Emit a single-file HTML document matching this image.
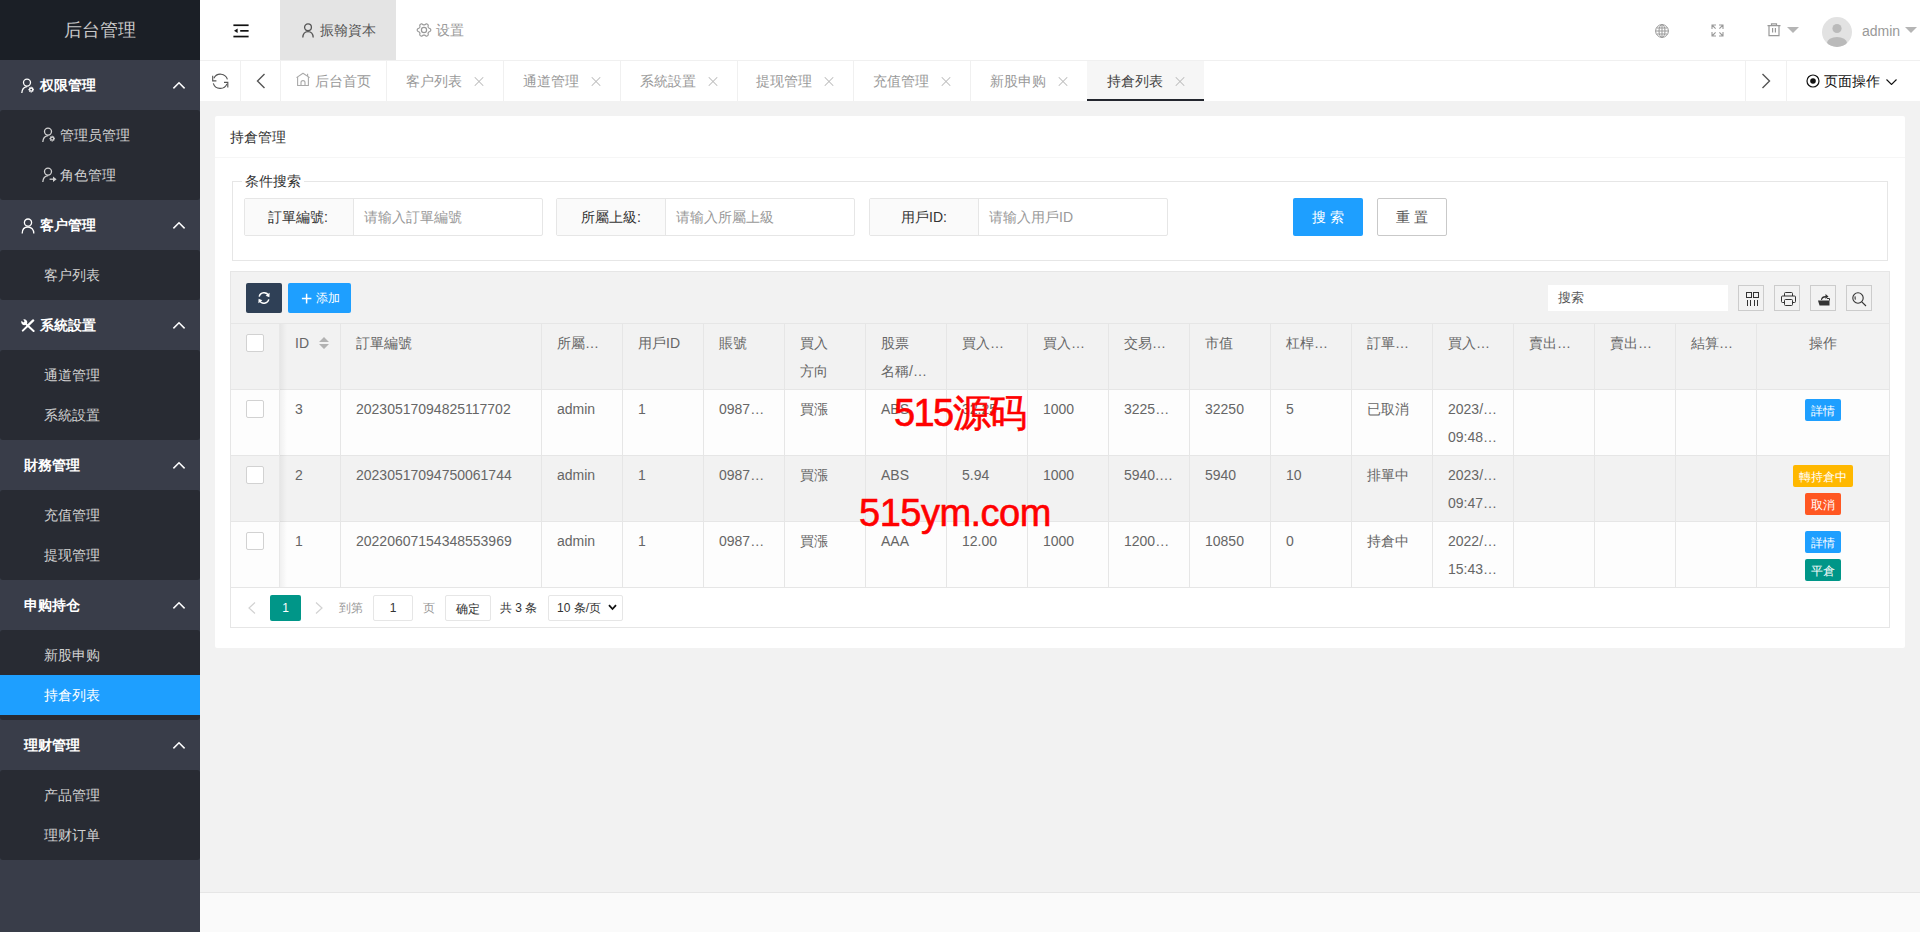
<!DOCTYPE html>
<html><head><meta charset="utf-8">
<style>
*{margin:0;padding:0;box-sizing:border-box}
html,body{width:1920px;height:932px;overflow:hidden;background:#f2f2f2;font-family:"Liberation Sans",sans-serif;font-size:14px;color:#333}
.abs{position:absolute}
#side{position:absolute;left:0;top:0;width:200px;height:932px;background:#393d49}
#logo{position:absolute;left:0;top:0;width:200px;height:60px;background:#1b1f26;color:#c8c8c8;font-size:18px;line-height:60px;text-align:center}
.pm{position:absolute;left:0;width:200px;height:50px;line-height:50px;color:#fff;font-weight:bold;font-size:14px;padding-left:24px}

.cb{position:absolute;left:0;width:200px;background:#282b33;border-radius:3px}
.ci{position:absolute;left:0;width:200px;height:40px;line-height:40px;color:#d2d2d2;padding-left:44px}
.ci.on{background:#1e9fff;color:#fff}
#head{position:absolute;left:200px;top:0;width:1720px;height:60px;background:#fff}
#tabs{position:absolute;left:200px;top:60px;width:1720px;height:41px;background:#fff;border-top:1px solid #f0f0f0}
#foot{position:absolute;left:200px;top:892px;width:1720px;height:40px;background:#fafafa;border-top:1px solid #e6e6e6}
#card{position:absolute;left:215px;top:116px;width:1690px;height:532px;background:#fff;border-radius:2px}
.tt{top:0;line-height:41px;color:#999}
.sep{position:absolute;top:0;width:1px;height:40px;background:#f0f0f0}
.cx{position:absolute;top:15px;width:10px;height:10px}
.cx:before,.cx:after{content:"";position:absolute;left:-1px;top:4.5px;width:12px;height:1px;background:#bbb;transform:rotate(45deg)}
.cx:after{transform:rotate(-45deg)}
</style><style>
#card{position:absolute;left:215px;top:116px;width:1690px;height:532px;background:#fff;border-radius:2px}
.ch{position:absolute;left:0;top:0;width:1690px;height:42px;border-bottom:1px solid #f6f6f6;line-height:42px;padding-left:15px;color:#333}
.fs{position:absolute;border:1px solid #e6e6e6}
.lg{position:absolute;background:#fff;padding:0 3px;line-height:20px;color:#333}
.ib{position:absolute;height:38px;border:1px solid #e6e6e6;border-radius:2px;background:#fff}
.ib .lb{position:absolute;left:0;top:0;width:109px;height:36px;background:#fafafa;border-right:1px solid #e6e6e6;line-height:36px;color:#333}
.ib .ph{position:absolute;left:119px;top:0;line-height:36px;color:#999}
.btn{position:absolute;height:38px;line-height:38px;text-align:center;border-radius:2px}
.tb{position:absolute;left:230px;top:271px;width:1660px;height:357px;border:1px solid #e6e6e6;background:#fff}
.cell{position:absolute;line-height:28px;color:#666;white-space:nowrap}
.vl{position:absolute;width:1px;background:#e6e6e6}
.hl{position:absolute;height:1px;background:#e6e6e6}
.chk{position:absolute;width:18px;height:18px;border:1px solid #d2d2d2;border-radius:2px;background:#fff}
.xs{position:absolute;height:22px;line-height:24px;font-size:12px;color:#fff;border-radius:2px;text-align:center;padding:0 5px}
.ibtn{position:absolute;top:14px;width:26px;height:26px;border:1px solid #ccc;background:#f2f2f2}
.wm{position:absolute;color:#f00;font-size:38px;white-space:nowrap;font-family:"Liberation Sans",sans-serif;-webkit-text-stroke:0.6px #f00;letter-spacing:-1px}
</style></head><body>
<div id="side">
  <div id="logo">后台管理</div>
  <div class="pm" style="top:60px;padding-left:40px"><svg class="abs" style="left:21px;top:18px" width="16" height="16" viewBox="0 0 16 16"><g fill="none" stroke="#fff" stroke-width="1.3"><circle cx="6" cy="4.6" r="3.5"/><path d="M0.8 15 C1 11 3 9 6.2 8.6"/><circle cx="10.2" cy="11.6" r="1.6"/><path d="M10.2 8.8 V9.6 M10.2 13.6 V14.4 M7.4 11.6 H8.2 M12.2 11.6 H13 M8.3 9.7 L8.8 10.2 M11.6 13 L12.1 13.5 M8.3 13.5 L8.8 13 M11.6 10.2 L12.1 9.7"/></g></svg>权限管理<svg class="abs" style="left:172px;top:21px" width="14" height="9" viewBox="0 0 14 9"><path d="M1.4 7.4 L7 1.8 L12.6 7.4" fill="none" stroke="#fff" stroke-width="1.5"/></svg></div>
  <div class="cb" style="top:110px;height:90px">
    <div class="ci" style="top:5px;padding-left:60px"><svg class="abs" style="left:42px;top:12px" width="16" height="16" viewBox="0 0 16 16"><g fill="none" stroke="#d2d2d2" stroke-width="1.3"><circle cx="6" cy="4.6" r="3.5"/><path d="M0.8 15 C1 11 3 9 6.2 8.6"/><circle cx="10.2" cy="11.6" r="1.6"/><path d="M10.2 8.8 V9.6 M10.2 13.6 V14.4 M7.4 11.6 H8.2 M12.2 11.6 H13 M8.3 9.7 L8.8 10.2 M11.6 13 L12.1 13.5 M8.3 13.5 L8.8 13 M11.6 10.2 L12.1 9.7"/></g></svg>管理员管理</div>
    <div class="ci" style="top:45px;padding-left:60px"><svg class="abs" style="left:42px;top:12px" width="16" height="16" viewBox="0 0 16 16"><g fill="none" stroke="#d2d2d2" stroke-width="1.3"><circle cx="6" cy="4.6" r="3.5"/><path d="M0.8 15 C1 11 3 9 6.2 8.6"/><path d="M7.6 12.2 H12.6"/></g><path d="M11 9.4 L14.6 12.2 L11 15 Z" fill="#d2d2d2"/></svg>角色管理</div>
  </div>
  <div class="pm" style="top:200px;padding-left:40px"><svg class="abs" style="left:21px;top:18px" width="14" height="16" viewBox="0 0 14 16"><g fill="none" stroke="#fff" stroke-width="1.3"><circle cx="7" cy="4.6" r="3.6"/><path d="M1.2 15.5 C1.2 11.4 3.6 9 7 9 C10.4 9 12.8 11.4 12.8 15.5"/></g></svg>客户管理<svg class="abs" style="left:172px;top:21px" width="14" height="9" viewBox="0 0 14 9"><path d="M1.4 7.4 L7 1.8 L12.6 7.4" fill="none" stroke="#fff" stroke-width="1.5"/></svg></div>
  <div class="cb" style="top:250px;height:50px">
    <div class="ci" style="top:5px">客户列表</div>
  </div>
  <div class="pm" style="top:300px;padding-left:40px"><svg class="abs" style="left:21px;top:19px" width="14" height="13" viewBox="0 0 14 13"><g fill="none" stroke="#fff" stroke-linecap="round"><path d="M5 5 L12.6 12" stroke-width="2"/><path d="M7.8 5.6 L12.2 1.4" stroke-width="2.2"/><path d="M6.6 7 L1.8 11.6" stroke-width="2"/></g><path d="M0.6 1.8 A3 3 0 0 0 4.6 5.8 L6 4.4 A3 3 0 0 0 2.2 0.4 L3.6 2.2 L2.4 3.4 Z" fill="#fff"/></svg>系統設置<svg class="abs" style="left:172px;top:21px" width="14" height="9" viewBox="0 0 14 9"><path d="M1.4 7.4 L7 1.8 L12.6 7.4" fill="none" stroke="#fff" stroke-width="1.5"/></svg></div>
  <div class="cb" style="top:350px;height:90px">
    <div class="ci" style="top:5px">通道管理</div>
    <div class="ci" style="top:45px">系統設置</div>
  </div>
  <div class="pm" style="top:440px">財務管理<svg class="abs" style="left:172px;top:21px" width="14" height="9" viewBox="0 0 14 9"><path d="M1.4 7.4 L7 1.8 L12.6 7.4" fill="none" stroke="#fff" stroke-width="1.5"/></svg></div>
  <div class="cb" style="top:490px;height:90px">
    <div class="ci" style="top:5px">充值管理</div>
    <div class="ci" style="top:45px">提现管理</div>
  </div>
  <div class="pm" style="top:580px">申购持仓<svg class="abs" style="left:172px;top:21px" width="14" height="9" viewBox="0 0 14 9"><path d="M1.4 7.4 L7 1.8 L12.6 7.4" fill="none" stroke="#fff" stroke-width="1.5"/></svg></div>
  <div class="cb" style="top:630px;height:90px">
    <div class="ci" style="top:5px">新股申购</div>
    <div class="ci on" style="top:45px">持倉列表</div>
  </div>
  <div class="pm" style="top:720px">理财管理<svg class="abs" style="left:172px;top:21px" width="14" height="9" viewBox="0 0 14 9"><path d="M1.4 7.4 L7 1.8 L12.6 7.4" fill="none" stroke="#fff" stroke-width="1.5"/></svg></div>
  <div class="cb" style="top:770px;height:90px">
    <div class="ci" style="top:5px">产品管理</div>
    <div class="ci" style="top:45px">理财订单</div>
  </div>
</div>
<div id="head">
  <svg class="abs" style="left:33px;top:24px" width="16" height="14" viewBox="0 0 16 14"><rect x="0.4" y="0.4" width="15.2" height="1.7" fill="#111"/><rect x="7.2" y="6.0" width="8.4" height="1.7" fill="#111"/><rect x="0.4" y="11.7" width="15.2" height="1.7" fill="#111"/><path d="M1 6.85 L4.6 4.6 L4.6 9.1 Z" fill="#111"/></svg>
  <div class="abs" style="left:80px;top:0;width:116px;height:60px;background:#e4e4e4"></div>
  <svg class="abs" style="left:102px;top:23px" width="12" height="15" viewBox="0 0 12 15"><circle cx="6" cy="4.3" r="3.4" fill="none" stroke="#555" stroke-width="1.3"/><path d="M0.8 14.5 C1 10.2 3.2 8.6 6 8.6 C8.8 8.6 11 10.2 11.2 14.5" fill="none" stroke="#555" stroke-width="1.3"/></svg>
  <div class="abs" style="left:120px;top:0;line-height:60px;color:#555">振翰資本</div>
  <svg class="abs" style="left:216px;top:22px" width="16" height="16" viewBox="0 0 16 16"><path d="M14.75 8.00 L14.72 8.35 L14.61 8.69 L14.44 9.02 L14.18 9.31 L13.70 9.53 L13.21 9.69 L12.93 9.89 L12.71 10.10 L12.52 10.30 L12.37 10.53 L12.26 10.76 L12.17 11.03 L12.10 11.32 L12.07 11.67 L12.17 12.17 L12.23 12.70 L12.10 13.07 L11.91 13.38 L11.66 13.64 L11.38 13.85 L11.05 13.99 L10.70 14.07 L10.34 14.09 L9.95 14.01 L9.53 13.70 L9.14 13.36 L8.83 13.22 L8.54 13.12 L8.27 13.07 L8.00 13.05 L7.73 13.07 L7.46 13.12 L7.17 13.22 L6.86 13.36 L6.47 13.70 L6.05 14.01 L5.66 14.09 L5.30 14.07 L4.95 13.99 L4.63 13.85 L4.34 13.64 L4.09 13.38 L3.90 13.07 L3.77 12.70 L3.83 12.17 L3.93 11.67 L3.90 11.32 L3.83 11.03 L3.74 10.76 L3.63 10.53 L3.48 10.30 L3.29 10.10 L3.07 9.89 L2.79 9.69 L2.30 9.53 L1.82 9.31 L1.56 9.02 L1.39 8.69 L1.28 8.35 L1.25 8.00 L1.28 7.65 L1.39 7.31 L1.56 6.98 L1.82 6.69 L2.30 6.47 L2.79 6.31 L3.07 6.11 L3.29 5.90 L3.48 5.70 L3.63 5.48 L3.74 5.24 L3.83 4.97 L3.90 4.68 L3.93 4.33 L3.83 3.83 L3.77 3.30 L3.90 2.93 L4.09 2.62 L4.34 2.36 L4.62 2.15 L4.95 2.01 L5.30 1.93 L5.66 1.91 L6.05 1.99 L6.47 2.30 L6.86 2.64 L7.17 2.78 L7.46 2.88 L7.73 2.93 L8.00 2.95 L8.27 2.93 L8.54 2.88 L8.83 2.78 L9.14 2.64 L9.53 2.30 L9.95 1.99 L10.34 1.91 L10.70 1.93 L11.05 2.01 L11.38 2.15 L11.66 2.36 L11.91 2.62 L12.10 2.93 L12.23 3.30 L12.17 3.83 L12.07 4.33 L12.10 4.68 L12.17 4.97 L12.26 5.24 L12.37 5.48 L12.52 5.70 L12.71 5.90 L12.93 6.11 L13.21 6.31 L13.70 6.47 L14.18 6.69 L14.44 6.98 L14.61 7.31 L14.72 7.65 L14.75 8.00 Z" fill="none" stroke="#999" stroke-width="1.2"/><circle cx="8" cy="8" r="2.6" fill="none" stroke="#999" stroke-width="1.2"/></svg>
  <div class="abs" style="left:236px;top:0;line-height:60px;color:#999">设置</div>
  <svg class="abs" style="left:1455px;top:24px" width="14" height="14" viewBox="0 0 14 14"><g fill="none" stroke="#999" stroke-width="1"><circle cx="7" cy="7" r="6.4"/><ellipse cx="7" cy="7" rx="3" ry="6.4"/><path d="M7 0.6 V13.4 M0.6 7 H13.4 M1.6 4 H12.4 M1.6 10 H12.4"/></g></svg>
  <svg class="abs" style="left:1511px;top:24px" width="13" height="13" viewBox="0 0 13 13"><g fill="none" stroke="#999" stroke-width="1.1"><path d="M1 5 V1 H5 M1 1 L4.6 4.6 M12 5 V1 H8 M12 1 L8.4 4.6 M1 8 V12 H5 M1 12 L4.6 8.4 M12 8 V12 H8 M12 12 L8.4 8.4"/></g></svg>
  <svg class="abs" style="left:1567px;top:23px" width="14" height="14" viewBox="0 0 14 14"><g fill="none" stroke="#999" stroke-width="1.2"><path d="M0.5 2.6 H13.5 M4.5 2.6 V0.8 H9.5 V2.6 M2 2.6 V12.6 H12 V2.6 M5.6 5 V9.5 M8.4 5 V9.5"/></g></svg>
  <svg class="abs" style="left:1587px;top:27px" width="12" height="6" viewBox="0 0 12 6"><path d="M0 0 H12 L6 6 Z" fill="#b5b5b5"/></svg>
  <svg class="abs" style="left:1622px;top:17px" width="30" height="30" viewBox="0 0 30 30"><defs><clipPath id="avc"><circle cx="15" cy="15" r="15"/></clipPath></defs><circle cx="15" cy="15" r="15" fill="#e2e2e2"/><g clip-path="url(#avc)" fill="#bababa"><circle cx="15" cy="11.5" r="4.6"/><ellipse cx="15" cy="26" rx="10" ry="6"/></g></svg>
  <div class="abs" style="left:1662px;top:1px;line-height:60px;color:#999">admin</div>
  <svg class="abs" style="left:1705px;top:27px" width="12" height="6" viewBox="0 0 12 6"><path d="M0 0 H12 L6 6 Z" fill="#b5b5b5"/></svg>
</div>
<div id="tabs">
  <svg class="abs" style="left:12px;top:12px" width="17" height="17" viewBox="0 0 17 17"><g fill="none" stroke="#555" stroke-width="1.15"><path d="M1.9 5.2 A7.3 7.3 0 0 1 15.4 6.4"/><path d="M15 10.9 A7.3 7.3 0 0 1 1.3 10.3"/><path d="M0.7 2.8 V7.8 H4.4"/><path d="M15.8 14.4 V9.4 H12"/></g></svg>
  <div class="abs" style="left:40px;top:0;width:1px;height:40px;background:#f0f0f0"></div>
  <svg class="abs" style="left:56px;top:12px" width="10" height="16" viewBox="0 0 10 16"><path d="M8.5 1 L1.5 8 L8.5 15" fill="none" stroke="#555" stroke-width="1.4"/></svg>
  <div class="abs" style="left:80px;top:0;width:1px;height:40px;background:#f0f0f0"></div>
  <svg class="abs" style="left:96px;top:11px" width="15" height="15" viewBox="0 0 15 15"><g fill="none" stroke="#aaa" stroke-width="1.1" stroke-linejoin="round"><path d="M0.5 5.6 L7 1.3 L13.6 5.6"/><path d="M1.6 5 V13.5 H12.4 V5"/><path d="M5 13.5 V10.6 A2 2 0 0 1 9 10.6 V13.5"/><path d="M11.6 1.8 V4.2"/></g></svg>
  <div class="abs tt" style="left:115px">后台首页</div>
  <div class="sep" style="left:186px"></div>
  <div class="abs tt" style="left:206px">客户列表</div><i class="cx" style="left:274px"></i>
  <div class="sep" style="left:303px"></div>
  <div class="abs tt" style="left:323px">通道管理</div><i class="cx" style="left:391px"></i>
  <div class="sep" style="left:420px"></div>
  <div class="abs tt" style="left:440px">系統設置</div><i class="cx" style="left:508px"></i>
  <div class="sep" style="left:537px"></div>
  <div class="abs tt" style="left:556px">提现管理</div><i class="cx" style="left:624px"></i>
  <div class="sep" style="left:653px"></div>
  <div class="abs tt" style="left:673px">充值管理</div><i class="cx" style="left:741px"></i>
  <div class="sep" style="left:770px"></div>
  <div class="abs tt" style="left:790px">新股申购</div><i class="cx" style="left:858px"></i>
  <div class="abs" style="left:887px;top:0;width:117px;height:40px;background:#f6f6f6;border-bottom:2px solid #23262e"></div>
  <div class="abs tt" style="left:907px;color:#444">持倉列表</div><i class="cx" style="left:975px"></i>
  <div class="sep" style="left:1545px"></div>
  <svg class="abs" style="left:1561px;top:12px" width="10" height="16" viewBox="0 0 10 16"><path d="M1.5 1 L8.5 8 L1.5 15" fill="none" stroke="#555" stroke-width="1.4"/></svg>
  <div class="sep" style="left:1586px"></div>
  <svg class="abs" style="left:1606px;top:13px" width="14" height="14" viewBox="0 0 14 14"><circle cx="7" cy="7" r="6" fill="none" stroke="#111" stroke-width="1.2"/><circle cx="7" cy="7" r="2.8" fill="#111"/></svg>
  <div class="abs tt" style="left:1624px;color:#111">页面操作</div>
  <svg class="abs" style="left:1686px;top:18px" width="11" height="6" viewBox="0 0 11 6"><path d="M0.5 0.5 L5.5 5.5 L10.5 0.5" fill="none" stroke="#111" stroke-width="1.1"/></svg>
</div>
<div id="card"></div>
<div class="ch abs" style="left:215px;top:116px">持倉管理</div>
<div class="fs" style="left:232px;top:181px;width:1656px;height:80px"></div>
<div class="lg" style="left:242px;top:171px">条件搜索</div>
<div class="ib" style="left:244px;top:198px;width:299px"><div class="lb"><span style="position:absolute;left:23px">訂單編號:</span></div><div class="ph">请输入訂單編號</div></div>
<div class="ib" style="left:556px;top:198px;width:299px"><div class="lb"><span style="position:absolute;left:24px">所屬上級:</span></div><div class="ph">请输入所屬上級</div></div>
<div class="ib" style="left:869px;top:198px;width:299px"><div class="lb"><span style="position:absolute;left:31px">用戶ID:</span></div><div class="ph">请输入用戶ID</div></div>
<div class="btn" style="left:1293px;top:198px;width:70px;background:#1e9fff;color:#fff;letter-spacing:4px;text-indent:4px">搜索</div>
<div class="btn" style="left:1377px;top:198px;width:70px;background:#fff;border:1px solid #c9c9c9;color:#555;line-height:36px;letter-spacing:4px;text-indent:4px">重置</div>
<div class="tb"></div>
<div class="abs" style="left:231px;top:272px;width:1658px;height:51px;background:#f2f2f2"></div>
<div class="abs" style="left:246px;top:283px;width:36px;height:30px;background:#2f4056;border-radius:2px"></div>
<svg class="abs" style="left:257px;top:291px" width="14" height="14" viewBox="0 0 14 14"><g fill="none" stroke="#fff" stroke-width="1.5"><path d="M2.2 5.6 A5 5 0 0 1 11.6 4.8"/><path d="M11.8 8.4 A5 5 0 0 1 2.4 9.2"/></g><path d="M12.6 1.8 L12.4 6.2 L8.6 4.8 Z" fill="#fff"/><path d="M1.4 12.2 L1.6 7.8 L5.4 9.2 Z" fill="#fff"/></svg>
<div class="abs" style="left:288px;top:283px;width:63px;height:30px;background:#1e9fff;border-radius:2px"></div>
<svg class="abs" style="left:301px;top:293px" width="11" height="11" viewBox="0 0 11 11"><path d="M5.6 0.8 V10.4 M0.9 5.6 H10.4" stroke="#fff" stroke-width="1.5"/></svg>
<div class="abs" style="left:316px;top:283px;line-height:31px;font-size:12px;color:#fff">添加</div>
<div class="abs" style="left:1548px;top:285px;width:180px;height:26px;background:#fff;line-height:26px;padding-left:10px;color:#555;font-size:13px">搜索</div>
<div class="abs ibtn" style="left:1738px;top:285px"></div>
<div class="abs ibtn" style="left:1774px;top:285px"></div>
<div class="abs ibtn" style="left:1810px;top:285px"></div>
<div class="abs ibtn" style="left:1846px;top:285px"></div>
<svg class="abs" style="left:1746px;top:292px" width="14" height="14" viewBox="0 0 14 14"><g fill="none" stroke="#333" stroke-width="1"><rect x="0.5" y="0.5" width="5" height="5"/><rect x="7.5" y="0.5" width="5" height="5"/><path d="M1.5 8 V14 M4.5 8 V14 M8.5 8 V14 M11.5 8 V14"/></g></svg>
<svg class="abs" style="left:1781px;top:292px" width="15" height="14" viewBox="0 0 15 14"><g fill="none" stroke="#333" stroke-width="1"><path d="M3.5 4 V1.5 Q3.5 0.5 4.5 0.5 H10.5 Q11.5 0.5 11.5 1.5 V4"/><path d="M3.5 10.5 H1.5 Q0.5 10.5 0.5 9.5 V5 Q0.5 4 1.5 4 H13.5 Q14.5 4 14.5 5 V9.5 Q14.5 10.5 13.5 10.5 H11.5"/><rect x="3.5" y="7.5" width="8" height="6" rx="1"/></g></svg>
<svg class="abs" style="left:1817px;top:292px" width="14" height="14" viewBox="0 0 14 14"><path d="M1 8.5 H12.5 V13.5 H2.5 Z" fill="#333"/><path d="M4 8 Q4 4 8.5 4 V2 L11.5 4.5 L8.5 7 V5.5 Q5.5 5.5 5 8" fill="#333"/><path d="M10 6.5 H12.5 V8.5" fill="none" stroke="#333"/></svg>
<svg class="abs" style="left:1852px;top:292px" width="15" height="15" viewBox="0 0 15 15"><g fill="none" stroke="#333" stroke-width="1.1"><circle cx="6" cy="6" r="5.2"/><path d="M9.8 9.8 L14 14"/><path d="M3.2 4.4 Q2.8 6 3.4 7.6"/></g></svg>
<div class="abs" style="left:231px;top:324px;width:1658px;height:65px;background:#f2f2f2"></div>
<div class="abs" style="left:231px;top:390px;width:1658px;height:65px;background:#fdfdfd"></div>
<div class="abs" style="left:231px;top:522px;width:1658px;height:65px;background:#fdfdfd"></div>
<div class="abs" style="left:231px;top:456px;width:1658px;height:65px;background:#f2f2f2"></div>
<div class="hl" style="left:231px;top:323px;width:1658px"></div>
<div class="hl" style="left:231px;top:389px;width:1658px"></div>
<div class="hl" style="left:231px;top:455px;width:1658px"></div>
<div class="hl" style="left:231px;top:521px;width:1658px"></div>
<div class="hl" style="left:231px;top:587px;width:1658px"></div>
<div class="vl" style="left:340px;top:324px;height:263px"></div>
<div class="vl" style="left:541px;top:324px;height:263px"></div>
<div class="vl" style="left:622px;top:324px;height:263px"></div>
<div class="vl" style="left:703px;top:324px;height:263px"></div>
<div class="vl" style="left:784px;top:324px;height:263px"></div>
<div class="vl" style="left:865px;top:324px;height:263px"></div>
<div class="vl" style="left:946px;top:324px;height:263px"></div>
<div class="vl" style="left:1027px;top:324px;height:263px"></div>
<div class="vl" style="left:1108px;top:324px;height:263px"></div>
<div class="vl" style="left:1189px;top:324px;height:263px"></div>
<div class="vl" style="left:1270px;top:324px;height:263px"></div>
<div class="vl" style="left:1351px;top:324px;height:263px"></div>
<div class="vl" style="left:1432px;top:324px;height:263px"></div>
<div class="vl" style="left:1513px;top:324px;height:263px"></div>
<div class="vl" style="left:1594px;top:324px;height:263px"></div>
<div class="vl" style="left:1675px;top:324px;height:263px"></div>
<div class="vl" style="left:1756px;top:324px;height:263px"></div>
<div class="abs" style="left:279px;top:324px;width:8px;height:263px;background:linear-gradient(to right,rgba(0,0,0,0.06),rgba(0,0,0,0))"></div>
<div class="vl" style="left:279px;top:324px;height:263px;background:#e8e8e8"></div>
<div class="chk" style="left:246px;top:334px"></div>
<div class="chk" style="left:246px;top:400px"></div>
<div class="chk" style="left:246px;top:466px"></div>
<div class="chk" style="left:246px;top:532px"></div>
<div class="cell" style="left:295px;top:329px">ID</div>
<div class="cell" style="left:356px;top:329px">訂單編號</div>
<div class="cell" style="left:557px;top:329px">所屬…</div>
<div class="cell" style="left:638px;top:329px">用戶ID</div>
<div class="cell" style="left:719px;top:329px">賬號</div>
<div class="cell" style="left:800px;top:329px">買入<br>方向</div>
<div class="cell" style="left:881px;top:329px">股票<br>名稱/…</div>
<div class="cell" style="left:962px;top:329px">買入…</div>
<div class="cell" style="left:1043px;top:329px">買入…</div>
<div class="cell" style="left:1124px;top:329px">交易…</div>
<div class="cell" style="left:1205px;top:329px">市值</div>
<div class="cell" style="left:1286px;top:329px">杠桿…</div>
<div class="cell" style="left:1367px;top:329px">訂單…</div>
<div class="cell" style="left:1448px;top:329px">買入…</div>
<div class="cell" style="left:1529px;top:329px">賣出…</div>
<div class="cell" style="left:1610px;top:329px">賣出…</div>
<div class="cell" style="left:1691px;top:329px">結算…</div>
<div class="cell" style="left:1756px;top:329px;width:133px;text-align:center">操作</div>
<svg class="abs" style="left:319px;top:337px" width="10" height="12" viewBox="0 0 10 12"><path d="M0 5 L5 0 L10 5 Z M0 7 L5 12 L10 7 Z" fill="#b2b2b2"/></svg>
<div class="cell" style="left:295px;top:395px">3</div>
<div class="cell" style="left:356px;top:395px">20230517094825117702</div>
<div class="cell" style="left:557px;top:395px">admin</div>
<div class="cell" style="left:638px;top:395px">1</div>
<div class="cell" style="left:719px;top:395px">0987…</div>
<div class="cell" style="left:800px;top:395px">買漲</div>
<div class="cell" style="left:881px;top:395px">ABS</div>
<div class="cell" style="left:962px;top:395px">32.25</div>
<div class="cell" style="left:1043px;top:395px">1000</div>
<div class="cell" style="left:1124px;top:395px">3225…</div>
<div class="cell" style="left:1205px;top:395px">32250</div>
<div class="cell" style="left:1286px;top:395px">5</div>
<div class="cell" style="left:1367px;top:395px">已取消</div>
<div class="cell" style="left:1448px;top:395px">2023/…<br>09:48…</div>
<div class="cell" style="left:295px;top:461px">2</div>
<div class="cell" style="left:356px;top:461px">20230517094750061744</div>
<div class="cell" style="left:557px;top:461px">admin</div>
<div class="cell" style="left:638px;top:461px">1</div>
<div class="cell" style="left:719px;top:461px">0987…</div>
<div class="cell" style="left:800px;top:461px">買漲</div>
<div class="cell" style="left:881px;top:461px">ABS</div>
<div class="cell" style="left:962px;top:461px">5.94</div>
<div class="cell" style="left:1043px;top:461px">1000</div>
<div class="cell" style="left:1124px;top:461px">5940.…</div>
<div class="cell" style="left:1205px;top:461px">5940</div>
<div class="cell" style="left:1286px;top:461px">10</div>
<div class="cell" style="left:1367px;top:461px">排單中</div>
<div class="cell" style="left:1448px;top:461px">2023/…<br>09:47…</div>
<div class="cell" style="left:295px;top:527px">1</div>
<div class="cell" style="left:356px;top:527px">20220607154348553969</div>
<div class="cell" style="left:557px;top:527px">admin</div>
<div class="cell" style="left:638px;top:527px">1</div>
<div class="cell" style="left:719px;top:527px">0987…</div>
<div class="cell" style="left:800px;top:527px">買漲</div>
<div class="cell" style="left:881px;top:527px">AAA</div>
<div class="cell" style="left:962px;top:527px">12.00</div>
<div class="cell" style="left:1043px;top:527px">1000</div>
<div class="cell" style="left:1124px;top:527px">1200…</div>
<div class="cell" style="left:1205px;top:527px">10850</div>
<div class="cell" style="left:1286px;top:527px">0</div>
<div class="cell" style="left:1367px;top:527px">持倉中</div>
<div class="cell" style="left:1448px;top:527px">2022/…<br>15:43…</div>
<div class="xs" style="left:1805px;top:399px;width:36px;background:#1e9fff">詳情</div>
<div class="xs" style="left:1793px;top:465px;width:60px;background:#ffb800">轉持倉中</div>
<div class="xs" style="left:1805px;top:493px;width:36px;background:#ff5722">取消</div>
<div class="xs" style="left:1805px;top:531px;width:36px;background:#1e9fff">詳情</div>
<div class="xs" style="left:1805px;top:559px;width:36px;background:#009688">平倉</div>
<svg class="abs" style="left:247px;top:602px" width="10" height="12" viewBox="0 0 10 12"><path d="M8 0.5 L2 6 L8 11.5" fill="none" stroke="#d2d2d2" stroke-width="1.2"/></svg>
<div class="abs" style="left:270px;top:595px;width:31px;height:26px;background:#009688;border-radius:2px;color:#fff;font-size:12px;line-height:26px;text-align:center">1</div>
<svg class="abs" style="left:314px;top:602px" width="10" height="12" viewBox="0 0 10 12"><path d="M2 0.5 L8 6 L2 11.5" fill="none" stroke="#d2d2d2" stroke-width="1.2"/></svg>
<div class="abs" style="left:339px;top:595px;line-height:26px;font-size:12px;color:#999">到第</div>
<div class="abs" style="left:373px;top:595px;width:40px;height:26px;border:1px solid #e6e6e6;border-radius:2px;line-height:24px;font-size:12px;color:#333;text-align:center">1</div>
<div class="abs" style="left:423px;top:595px;line-height:26px;font-size:12px;color:#999">页</div>
<div class="abs" style="left:445px;top:595px;width:46px;height:26px;border:1px solid #e6e6e6;border-radius:2px;line-height:26px;font-size:12px;color:#333;text-align:center">确定</div>
<div class="abs" style="left:500px;top:595px;line-height:26px;font-size:12px;color:#333">共 3 条</div>
<div class="abs" style="left:548px;top:595px;width:75px;height:26px;border:1px solid #e6e6e6;border-radius:2px;line-height:24px;font-size:12px;color:#333;padding-left:8px">10 条/页</div>
<svg class="abs" style="left:608px;top:604px" width="9" height="7" viewBox="0 0 9 7"><path d="M1 1.2 L4.5 5 L8 1.2" fill="none" stroke="#111" stroke-width="1.8"/></svg>
<div class="wm" style="left:894px;top:388px;letter-spacing:-1.6px">515源码</div>
<div class="wm" style="left:859px;top:492px;letter-spacing:-0.5px">515ym.com</div>
<div id="foot"></div>
</body></html>
